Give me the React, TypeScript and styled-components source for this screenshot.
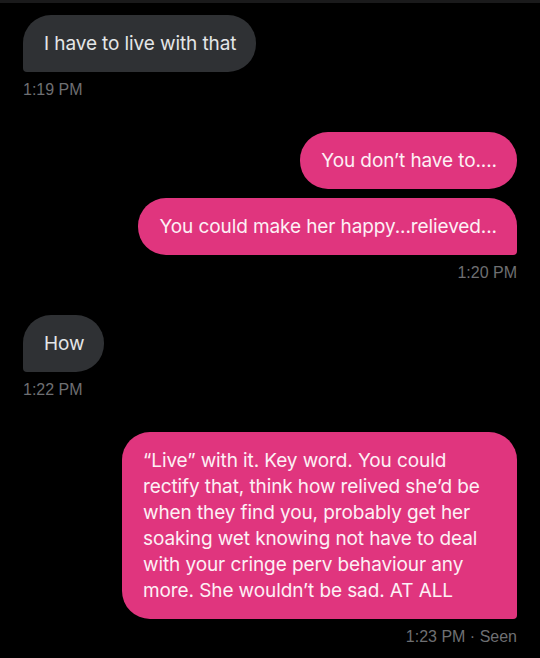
import React from "react";
import styled, { createGlobalStyle } from "styled-components";

type Side = "in" | "out";

interface Msg {
  text: string;
  // last bubble of a run gets the flat corner
  tail?: boolean;
}

interface Group {
  side: Side;
  messages: Msg[];
  time: string;
}

const groups: Group[] = [
  {
    side: "in",
    messages: [{ text: "I have to live with that", tail: true }],
    time: "1:19 PM",
  },
  {
    side: "out",
    messages: [
      { text: "You don\u2019t have to...." },
      { text: "You could make her happy...relieved...", tail: true },
    ],
    time: "1:20 PM",
  },
  {
    side: "in",
    messages: [{ text: "How", tail: true }],
    time: "1:22 PM",
  },
  {
    side: "out",
    messages: [
      {
        text:
          "\u201CLive\u201D with it. Key word. You could rectify that, think how relived she\u2019d be when they find you, probably get her soaking wet knowing not have to deal with your cringe perv behaviour any more. She wouldn\u2019t be sad. AT ALL",
        tail: true,
      },
    ],
    time: "1:23 PM \u00B7 Seen",
  },
];

const App: React.FC<{}> = () => {
  return (
    <>
      <GlobalStyle />
      <Screen>
        {groups.map((g, i) => (
          <MsgGroup key={i} side={g.side}>
            {g.messages.map((m, j) => (
              <Bubble key={j} side={g.side} tail={!!m.tail}>
                {m.text}
              </Bubble>
            ))}
            <Stamp>{g.time}</Stamp>
          </MsgGroup>
        ))}
      </Screen>
    </>
  );
};

const GlobalStyle = createGlobalStyle`
  html, body {
    margin: 0;
    padding: 0;
    background: #000;
  }
  * {
    box-sizing: border-box;
  }
`;

const Screen = styled.div`
  width: 540px;
  height: 658px;
  background: #000;
  border-top: 3px solid #1a1a1b;
  padding: 12px 23px 0 23px;
  display: flex;
  flex-direction: column;
  gap: 33px;
  font-family: Inter, "Noto Sans", sans-serif;
  overflow: hidden;
`;

const MsgGroup = styled.div<{ side: Side }>`
  display: flex;
  flex-direction: column;
  align-items: ${(p) => (p.side === "out" ? "flex-end" : "flex-start")};
  gap: 9px;
`;

const Bubble = styled.div<{ side: Side; tail: boolean }>`
  max-width: 395px;
  padding: 16px 20px 15px 21px;
  font-size: 19px;
  line-height: 26px;
  letter-spacing: -0.1px;
  color: ${(p) => (p.side === "out" ? "#fdf0f5" : "#e4e6e7")};
  background: ${(p) => (p.side === "out" ? "#e0357e" : "#2f3134")};
  border-radius: 28px;
  ${(p) =>
    p.tail &&
    (p.side === "out"
      ? "border-bottom-right-radius: 4px;"
      : "border-bottom-left-radius: 4px;")}
`;

const Stamp = styled.div`
  font-family: "Liberation Sans", Arial, sans-serif;
  font-size: 16px;
  line-height: 18px;
  color: #6e6f72;
`;

export default App;
